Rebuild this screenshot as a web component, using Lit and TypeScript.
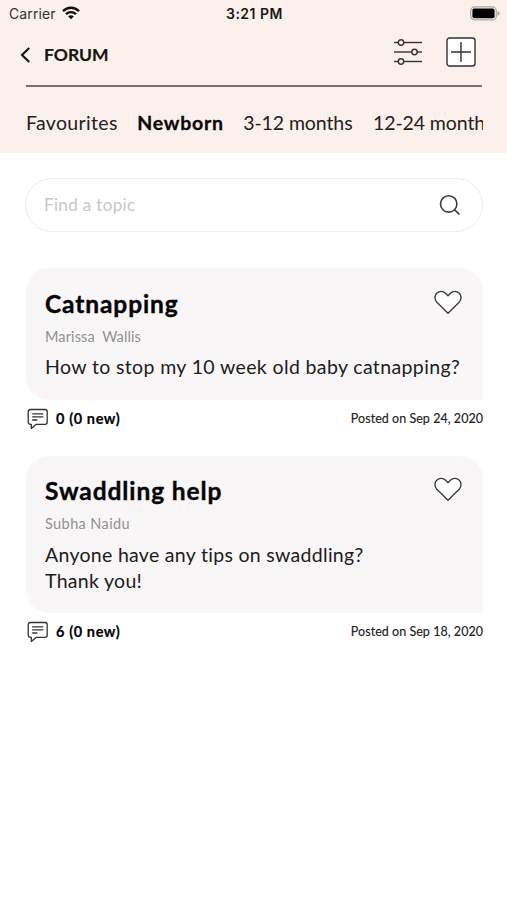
import { LitElement, html, css, svg } from "lit";
import { customElement, property } from "lit/decorators.js";

interface Post {
  title: string;
  author: string;
  lines: string[];
  replies: string;
  date: string;
  kind: string;
}

const posts: Post[] = [
  { title: "Catnapping", author: "Marissa  Wallis", lines: ["How to stop my 10 week old baby catnapping?"], replies: "0 (0 new)", date: "Posted on Sep 24, 2020", kind: "first" },
  { title: "Swaddling help", author: "Subha Naidu", lines: ["Anyone have any tips on swaddling?", "Thank you!"], replies: "6 (0 new)", date: "Posted on Sep 18, 2020", kind: "second" },
];

@customElement("forum-post")
export class ForumPost extends LitElement {
  @property({ attribute: false }) post!: Post;

  static styles = css`
    :host { display: block; }
    .card {
      box-sizing: border-box;
      display: flex;
      justify-content: space-between;
      background: #f8f6f7;
      border-radius: 23px 23px 0 23px;
      padding: 20px 21px 0 19px;
    }
    .first { height: 132px; }
    .second { height: 157px; padding-top: 19px; }
    .text { flex: none; width: 389px; }
    .title { font-size: 24.5px; line-height: 32px; font-weight: 700; color: #050505; letter-spacing: 0.9px; -webkit-text-stroke: 0.4px #050505; }
    .author { font-size: 14.5px; line-height: 20px; margin-top: 7px; color: #909090; letter-spacing: 0.4px; white-space: pre; }
    .first .author { letter-spacing: 0.12px; }
    .body { font-size: 19.5px; line-height: 26px; margin-top: 7px; color: #1c1c1c; letter-spacing: 0.3px; white-space: nowrap; }
    .first .body { letter-spacing: 0.37px; }
    .second .body { margin-top: 8px; }
    .heart { display: block; flex: none; margin-top: 1px; }
    .foot { display: flex; align-items: center; height: 36px; }
    .bubble { display: block; margin: 2px 7px 0 1px; }
    .count { font-size: 14.5px; font-weight: 700; letter-spacing: 0.6px; color: #050505; -webkit-text-stroke: 0.2px #050505; }
    .date { margin-left: auto; font-size: 12.5px; letter-spacing: 0.04px; color: #222; -webkit-text-stroke: 0.15px #222; }
  `;

  render() {
    const p = this.post;
    return html`
      <div class="card ${p.kind}">
        <div class="text">
          <div class="title">${p.title}</div>
          <div class="author">${p.author}</div>
          <div class="body">${p.lines.map((l) => html`<div>${l}</div>`)}</div>
        </div>
        <svg class="heart" width="28" height="26" viewBox="0 0 28 26">
          <path d="M14 24.3L2.9 13.3C.3 10.5 .4 6.5 2.7 4.2C5.4 1.6 9.2 1.9 11.6 4.2L14 6.7L16.4 4.2C18.8 1.9 22.6 1.6 25.3 4.2C27.6 6.5 27.7 10.5 25.1 13.3Z" fill="#fff" stroke="#3c3c40" stroke-width="1.4" stroke-linejoin="round" />
        </svg>
      </div>
      <div class="foot">
        <svg class="bubble" width="22" height="22" viewBox="0 0 22 22" fill="none" stroke="#333" stroke-width="1.3" stroke-linejoin="round">
          <path d="M3.5 1.5H18Q20.2 1.5 20.2 3.7V14.3Q20.2 16.4 18 16.4H9L4.3 20.4V16.4H3.7Q1.2 16.4 1.2 14V3.8Q1.2 1.5 3.5 1.5Z" />
          <path d="M5.2 5.8H16.3M5.2 8.8H16.3M5.2 12H10.3" />
        </svg>
        <span class="count">${p.replies}</span>
        <span class="date">${p.date}</span>
      </div>
    `;
  }
}

const slider = (y: number, x: number) => svg`<path d="M0 ${y}H28" /><circle cx=${x} cy=${y} r="2.7" fill="#fdf1ec" />`;

@customElement("app-root")
export class AppRoot extends LitElement {
  static styles = css`
    :host { display: block; height: 900px; overflow: hidden; background: #fff; font-family: Lato, "Liberation Sans", sans-serif; }
    .header { height: 153px; background: #fbf0eb; }
    .status { display: grid; grid-template-columns: 1fr auto 1fr; align-items: center; height: 26px; padding: 0 7px 0 9px; font-family: Inter, sans-serif; font-size: 14px; color: #1a1816; }
    .carrier { display: flex; align-items: center; gap: 6px; letter-spacing: 0.1px; color: #35312f; }
    .time { font-weight: 600; font-size: 14px; letter-spacing: 0.5px; }
    .battery { justify-self: end; display: block; }
    .bar { display: flex; align-items: center; box-sizing: border-box; height: 59px; margin: 0 25px 0 20px; padding-bottom: 7px; }
    .back { display: block; margin-top: 5px; }
    .name { font-size: 17.5px; font-weight: 700; margin: 4px auto 0 13px; color: #1a1614; -webkit-text-stroke: 0.2px #1a1614; }
    .sliders { display: block; margin-right: 24px; }
    .plus { display: block; margin-right: 6px; }
    .rule { height: 2px; margin: 0 25px 0 26px; background: #777170; }
    .tabs { display: flex; align-items: center; margin: 0 24px 0 26px; height: 70px; overflow: hidden; white-space: nowrap; font-size: 19.5px; color: #24201f; }
    .tab { flex: none; letter-spacing: 0.35px; margin-right: 19.5px; }
    .active { font-weight: 700; letter-spacing: 0.75px; color: #0a0808; -webkit-text-stroke: 0.3px #0a0808; }
    .range { letter-spacing: -0.1px; margin-right: 20.5px; }
    .search { display: flex; align-items: center; justify-content: space-between; box-sizing: border-box; height: 54px; margin: 25px 24px 0 25px; padding: 0 21px 0 18px; border: 1px solid #ececec; border-radius: 27px; }
    .hint { font-size: 17px; letter-spacing: 0.35px; margin-top: -2px; color: #c8c8c8; }
    .lens { display: block; }
    .list { margin: 36px 24px 0 26px; display: flex; flex-direction: column; gap: 20px; }
  `;

  render() {
    return html`
      <div class="header">
        <div class="status">
          <div class="carrier">
            <span>Carrier</span>
            <svg width="18" height="14" viewBox="0 0 18 14" fill="none" stroke="#111" stroke-width="2.4">
              <path d="M1 5.2C5.4 .6 12.6 .6 17 5.2" />
              <path d="M4 8.2C6.8 5.4 11.2 5.4 14 8.2" />
              <path d="M9 13.2L6.2 10.4C7.8 9 10.2 9 11.8 10.4Z" fill="#111" stroke="none" />
            </svg>
          </div>
          <div class="time">3:21 PM</div>
          <svg class="battery" width="30" height="15" viewBox="0 0 30 15">
            <rect x=".7" y=".9" width="25.6" height="13" rx="4" fill="#fbf0eb" stroke="#aaa5a1" stroke-width="1.2" />
            <rect x="2.4" y="2.6" width="22.2" height="9.6" rx="2" fill="#000" />
            <path d="M27.5 5Q29.6 5.6 29.6 7.4T27.5 9.8Z" fill="#aaa5a1" />
          </svg>
        </div>
        <div class="bar">
          <svg class="back" width="11" height="16" viewBox="0 0 11 16" fill="none" stroke="#1c1816" stroke-width="2.2">
            <path d="M9.2 1L2 8L9.2 15" />
          </svg>
          <div class="name">FORUM</div>
          <svg class="sliders" width="28" height="26" viewBox="0 0 28 26" fill="none" stroke="#37322f" stroke-width="1.4">
            ${slider(3.5, 7)}${slider(13, 20.5)}${slider(22.5, 7)}
          </svg>
          <svg class="plus" width="30" height="30" viewBox="0 0 30 30" stroke="#333136" stroke-width="1.4">
            <rect x="1" y="1" width="28" height="28" rx="2.5" fill="#fff" />
            <path d="M15 5V25M5 15H25" />
          </svg>
        </div>
        <div class="rule"></div>
        <div class="tabs">
          <span class="tab">Favourites</span>
          <span class="tab active">Newborn</span>
          <span class="tab range">3-12 months</span>
          <span class="tab range">12-24 months</span>
        </div>
      </div>
      <div class="search">
        <span class="hint">Find a topic</span>
        <svg class="lens" width="22" height="22" viewBox="0 0 22 22" fill="none" stroke="#3a3a3e" stroke-width="1.6">
          <circle cx="9.7" cy="9.9" r="8.2" />
          <path d="M15.4 15.6L20.4 20.4" />
        </svg>
      </div>
      <div class="list">
        ${posts.map((p) => html`<forum-post .post=${p}></forum-post>`)}
      </div>
    `;
  }
}
